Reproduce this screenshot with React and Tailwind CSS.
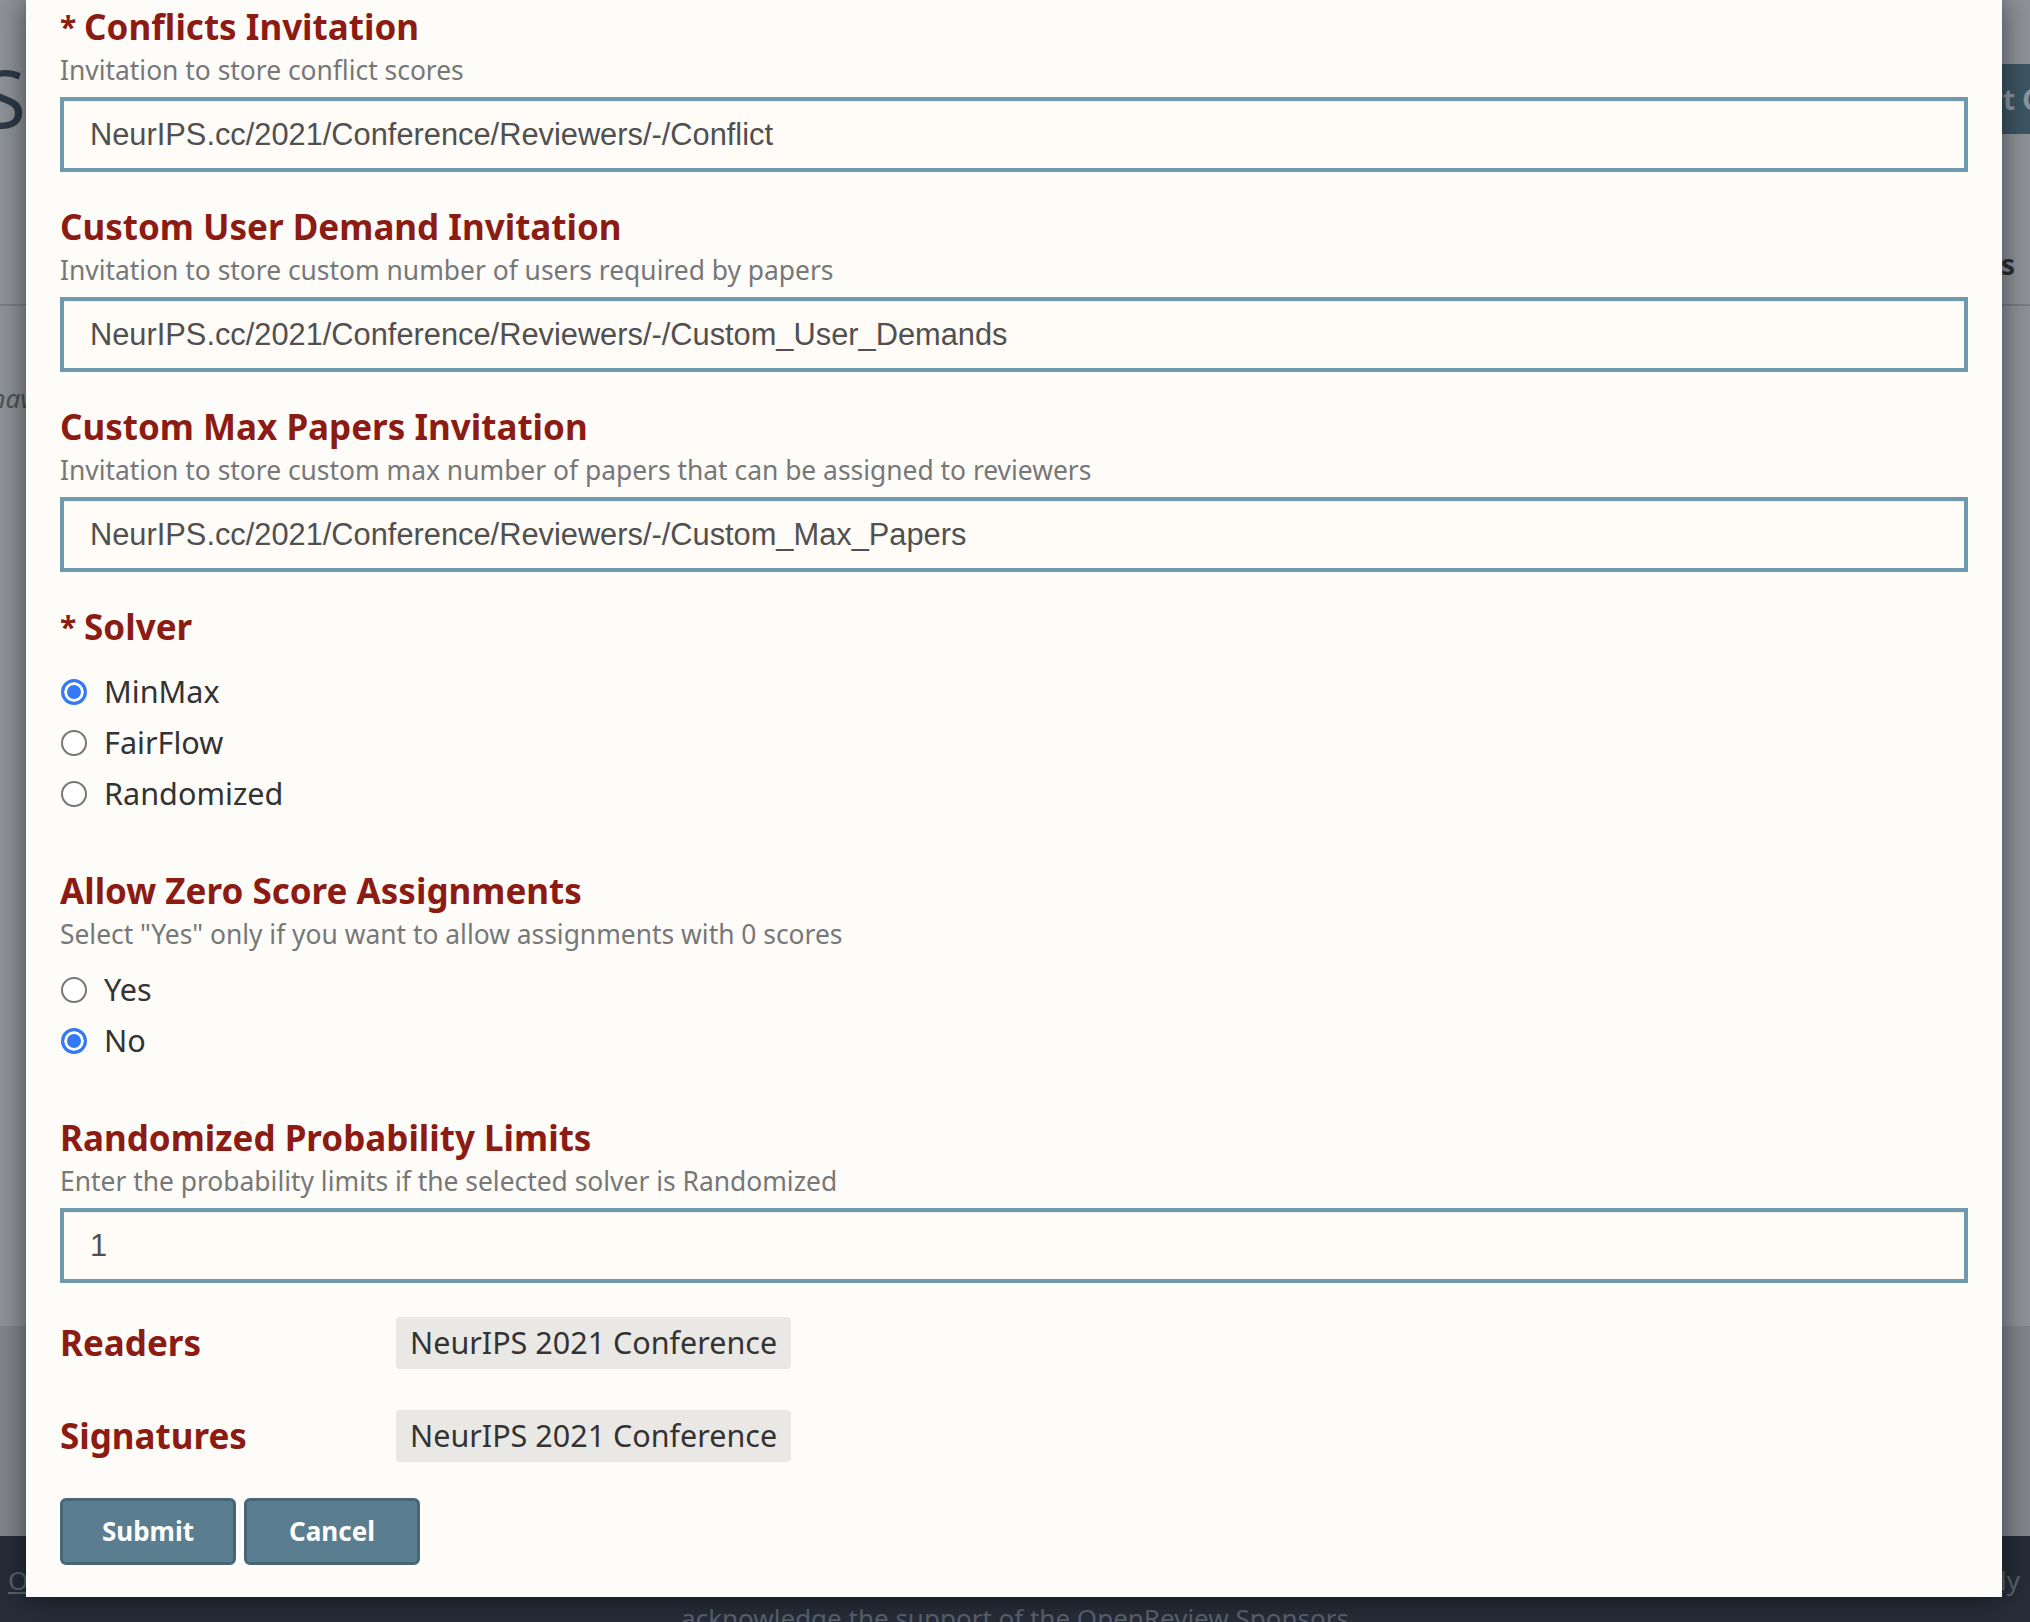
import React from "react";

const fields = [
  {
    label: "Conflicts Invitation",
    required: true,
    desc: "Invitation to store conflict scores",
    value: "NeurIPS.cc/2021/Conference/Reviewers/-/Conflict",
  },
  {
    label: "Custom User Demand Invitation",
    desc: "Invitation to store custom number of users required by papers",
    value: "NeurIPS.cc/2021/Conference/Reviewers/-/Custom_User_Demands",
  },
  {
    label: "Custom Max Papers Invitation",
    desc: "Invitation to store custom max number of papers that can be assigned to reviewers",
    value: "NeurIPS.cc/2021/Conference/Reviewers/-/Custom_Max_Papers",
  },
];

function Heading({ children, required }) {
  return (
    <h4 className="text-[35px] leading-[47px] font-bold text-[#8c1b13]">
      {required && <span className="text-[30px] align-top">* </span>}
      {children}
    </h4>
  );
}

function Desc({ children }) {
  return <p className="text-[26.4px] leading-[40px] text-[#777]">{children}</p>;
}

function TextInput({ value }) {
  return (
    <input
      readOnly
      value={value}
      className="block w-full h-[75px] mt-[7px] border-4 border-[#6f99ad] bg-[#fffbf6] pl-[26px] text-[30.8px] text-[#505050] font-['Liberation_Sans',Arial,sans-serif] shadow-[inset_0_1px_1px_rgba(0,0,0,0.075)] outline-none"
    />
  );
}

function Radio({ name, label, checked }) {
  return (
    <label className="flex items-center h-[51px]">
      <input
        type="radio"
        name={name}
        defaultChecked={checked}
        className="appearance-none ml-[1px] w-[26px] h-[26px] rounded-full border-2 border-[#767676] bg-white checked:border-[3px] checked:border-[#3478f6] checked:bg-[#3478f6] checked:shadow-[inset_0_0_0_3px_white]"
      />
      <span className="ml-[17px] text-[30.6px] text-[#333]">{label}</span>
    </label>
  );
}

function Chip({ children }) {
  return (
    <span className="h-[52px] px-[14px] flex items-center rounded-[4px] bg-[#e9e8e4] text-[30.5px] text-[#333]">
      {children}
    </span>
  );
}

function BackgroundPage() {
  return (
    <div className="flex flex-col h-full">
      <div className="h-[1326px] shrink-0 flex flex-col">
        <div className="flex justify-between items-start h-[190px]">
          <div className="w-[26px] mt-[57px] overflow-hidden flex justify-end">
            <span className="whitespace-nowrap text-[80px] leading-[80px] text-[#2c3947]">
              Assignments for NeurIPS
            </span>
          </div>
          <div className="w-[28px] mt-[64px] overflow-hidden">
            <button className="-ml-[105px] h-[70px] px-[20px] whitespace-nowrap bg-[#3d5564] text-[28px] font-bold text-[#8b98a2]">
              Import Configuration
            </button>
          </div>
        </div>
        <div className="flex justify-between items-start h-[116px] border-b-2 border-[#7b7f84]">
          <div className="w-[26px]" />
          <div className="w-[28px] mt-[54px] overflow-hidden">
            <span className="block -ml-[91px] whitespace-nowrap text-[28px] leading-[40px] font-bold text-[#2a2f35]">
              Actions
            </span>
          </div>
        </div>
        <div className="w-[26px] mt-[74px] overflow-hidden">
          <span className="block -ml-[58px] whitespace-nowrap italic text-[26px] leading-[36px] text-[#4e5258]">
            You have not created any configurations yet
          </span>
        </div>
      </div>
      <div className="h-[210px] shrink-0 bg-[#82868b]" />
      <div className="flex-1 bg-[#262d39] pt-[26px] text-[26px] text-[#59616c]">
        <div className="flex justify-between leading-[36px]">
          <div className="w-[26px] overflow-hidden">
            <span className="ml-[8px] underline whitespace-nowrap">OpenReview</span>
          </div>
          <div className="w-[28px] pr-[10px] overflow-hidden flex justify-end">
            <span className="whitespace-nowrap">openly</span>
          </div>
        </div>
        <p className="text-center leading-[40px]">
          acknowledge the support of the OpenReview Sponsors
        </p>
      </div>
    </div>
  );
}

export default function App() {
  return (
    <div className="relative w-[2030px] h-[1622px] overflow-hidden bg-[#8f9398] font-['Noto_Sans',sans-serif]">
      <BackgroundPage />

      <div className="absolute left-[26px] top-0 w-[1976px] h-[1597px] bg-[#fdfcf8] shadow-[0_0_28px_rgba(0,0,0,0.55)] px-[34px] pt-[3px]">
        {fields.map((f) => (
          <div key={f.label} className="mb-[31px]">
            <Heading required={f.required}>{f.label}</Heading>
            <Desc>{f.desc}</Desc>
            <TextInput value={f.value} />
          </div>
        ))}

        <Heading required>Solver</Heading>
        <div className="mt-[16px]">
          <Radio name="solver" label="MinMax" checked />
          <Radio name="solver" label="FairFlow" />
          <Radio name="solver" label="Randomized" />
        </div>

        <div className="mt-[48px]">
          <Heading>Allow Zero Score Assignments</Heading>
          <Desc>Select "Yes" only if you want to allow assignments with 0 scores</Desc>
          <div className="mt-[10px]">
            <Radio name="zero" label="Yes" />
            <Radio name="zero" label="No" checked />
          </div>
        </div>

        <div className="mt-[48px]">
          <Heading>Randomized Probability Limits</Heading>
          <Desc>Enter the probability limits if the selected solver is Randomized</Desc>
          <TextInput value="1" />
        </div>

        <div className="mt-[34px] flex items-center">
          <span className="w-[336px] shrink-0 text-[35px] font-bold text-[#8c1b13]">Readers</span>
          <Chip>NeurIPS 2021 Conference</Chip>
        </div>
        <div className="mt-[40px] flex items-center">
          <span className="w-[336px] shrink-0 text-[35px] font-bold text-[#8c1b13]">Signatures</span>
          <Chip>NeurIPS 2021 Conference</Chip>
        </div>

        <div className="mt-[36px] flex gap-[8px]">
          <button className="w-[176px] h-[67px] rounded-[6px] border-[3px] border-[#476677] bg-[#5a7e90] text-[26px] font-bold text-white">
            Submit
          </button>
          <button className="w-[176px] h-[67px] rounded-[6px] border-[3px] border-[#476677] bg-[#5a7e90] text-[26px] font-bold text-white">
            Cancel
          </button>
        </div>
      </div>
    </div>
  );
}
